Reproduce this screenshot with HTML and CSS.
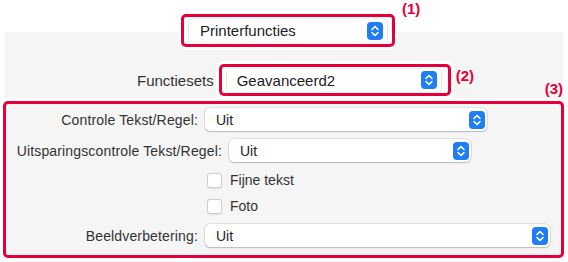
FILE: index.html
```html
<!DOCTYPE html>
<html lang="nl">
<head>
  <meta charset="UTF-8" />
  <title>Printerfuncties</title>
  <link rel="stylesheet" href="styles.css">
</head>
<body>
  <div class="panel">
    <div class="head">
      <div class="mark mark-top mark-one">
        <div class="popup popup-flat popup-one">
          <span>Printerfuncties</span>
          <svg class="arrows" width="16" height="18" viewBox="0 0 16 18"><rect width="16" height="18" rx="4" fill="#1f7ef5"/><path d="M5 7.5 8 4.5 11 7.5M5 10.5 8 13.5 11 10.5" fill="none" stroke="#fff" stroke-width="1.6" stroke-linecap="round" stroke-linejoin="round"/></svg>
        </div>
      </div>
      <span class="tag tag-one">(1)</span>
    </div>

    <div class="sets">
      <span class="sets-label">Functiesets</span>
      <div class="mark mark-top mark-two">
        <div class="popup popup-flat popup-two">
          <span>Geavanceerd2</span>
          <svg class="arrows" width="16" height="18" viewBox="0 0 16 18"><rect width="16" height="18" rx="4" fill="#1f7ef5"/><path d="M5 7.5 8 4.5 11 7.5M5 10.5 8 13.5 11 10.5" fill="none" stroke="#fff" stroke-width="1.6" stroke-linecap="round" stroke-linejoin="round"/></svg>
        </div>
      </div>
      <span class="tag tag-two">(2)</span>
      <span class="tag tag-three">(3)</span>
    </div>

    <!-- Instellingen -->
    <div class="mark mark-group">
      <div class="field">
        <span class="label w-short">Controle Tekst/Regel:</span>
        <div class="popup popup-a">
          <span>Uit</span>
          <svg class="arrows" width="16" height="18" viewBox="0 0 16 18"><rect width="16" height="18" rx="4" fill="#1f7ef5"/><path d="M5 7.5 8 4.5 11 7.5M5 10.5 8 13.5 11 10.5" fill="none" stroke="#fff" stroke-width="1.6" stroke-linecap="round" stroke-linejoin="round"/></svg>
        </div>
      </div>
      <div class="field">
        <span class="label w-long">Uitsparingscontrole Tekst/Regel:</span>
        <div class="popup popup-b">
          <span>Uit</span>
          <svg class="arrows" width="16" height="18" viewBox="0 0 16 18"><rect width="16" height="18" rx="4" fill="#1f7ef5"/><path d="M5 7.5 8 4.5 11 7.5M5 10.5 8 13.5 11 10.5" fill="none" stroke="#fff" stroke-width="1.6" stroke-linecap="round" stroke-linejoin="round"/></svg>
        </div>
      </div>
      <div class="checks">
        <label class="check"><span class="box"></span>Fijne tekst</label>
        <label class="check"><span class="box"></span>Foto</label>
      </div>
      <div class="field">
        <span class="label w-short">Beeldverbetering:</span>
        <div class="popup popup-c">
          <span>Uit</span>
          <svg class="arrows" width="16" height="18" viewBox="0 0 16 18"><rect width="16" height="18" rx="4" fill="#1f7ef5"/><path d="M5 7.5 8 4.5 11 7.5M5 10.5 8 13.5 11 10.5" fill="none" stroke="#fff" stroke-width="1.6" stroke-linecap="round" stroke-linejoin="round"/></svg>
        </div>
      </div>
    </div>
  </div>
</body>
</html>
```

FILE: styles.css
```css
body {
  margin: 0;
  background: #fff;
  font-family: 'Liberation Sans', Arial, sans-serif;
  color: #2a2a2a;
}
.panel {
  margin: 32px 5px 0;
  height: 230px;
  background: #f5f5f5;
  display: flex;
  flex-direction: column;
}
/* rode markeringen */
.mark {
  border: 3px solid #e5003a;
  border-radius: 5px;
  box-shadow: 0 0 0 3px #fff;
  box-sizing: border-box;
}
.mark-top {
  background: #fff;
  display: flex;
  align-items: center;
  padding: 0 4px;
}
.tag {
  color: #e5003a;
  font-weight: 700;
  font-size: 15px;
  line-height: 16px;
}
.head {
  display: flex;
  align-items: flex-start;
  margin-top: -18px;
  padding-left: 176px;
}
.mark-one {
  width: 214px;
  height: 33px;
}
.tag-one {
  margin: -13px 0 0 7px;
}
.sets {
  display: flex;
  align-items: center;
  margin-top: 17px;
  padding-left: 132px;
}
.sets-label {
  font-size: 15px;
  color: #333;
  margin-right: 5px;
}
.mark-two {
  width: 232px;
  height: 32px;
  padding-right: 6px;
}
.tag-two {
  margin: 0 0 8px 5px;
}
.tag-three {
  margin-left: auto;
  align-self: flex-end;
  margin-bottom: -1px;
}
/* pop-up knoppen */
.popup {
  display: flex;
  align-items: center;
  justify-content: space-between;
  box-sizing: border-box;
  height: 23px;
  background: #fff;
  border-radius: 5px;
  padding: 0 2px 0 11px;
  font-size: 14px;
  color: #222;
  box-shadow:
    0 0 0 0.5px rgba(0,0,0,0.16),
    0 1px 1.5px rgba(0,0,0,0.18);
}
.popup-flat {
  flex: 1;
  height: 25px;
  font-size: 15px;
  border: 1px solid #e6e6e6;
  border-top-color: #f3f3f3;
  border-bottom-color: #f3f3f3;
  box-shadow: none;
  padding: 0 4px 0 11px;
}
.popup-two {
  padding-left: 10px;
}
.arrows {
  display: block;
  flex: none;
}
.mark-group {
  margin: 5px -1px 0 -2px;
  height: 157px;
  background: #f5f5f5;
  display: flex;
  flex-direction: column;
  gap: 8px;
  padding-top: 4px;
}
.field {
  display: flex;
  align-items: center;
  gap: 7px;
}
.label {
  flex: none;
  text-align: right;
  font-size: 14px;
  letter-spacing: 0.15px;
  color: #333;
}
.w-short { width: 192px; }
.w-long { width: 216px; }
.popup-a { width: 282px; }
.popup-b { width: 242px; }
.popup-c { width: 345px; }
.checks {
  display: flex;
  flex-direction: column;
  gap: 6px;
  padding-left: 201px;
}
.check {
  display: flex;
  align-items: center;
  gap: 8px;
  height: 20px;
  font-size: 14px;
  color: #333;
}
.box {
  width: 15px;
  height: 15px;
  box-sizing: border-box;
  background: #fff;
  border: 1px solid #cdcdcd;
  border-radius: 3px;
  box-shadow: 0 0.5px 1px rgba(0,0,0,0.08);
}
```
